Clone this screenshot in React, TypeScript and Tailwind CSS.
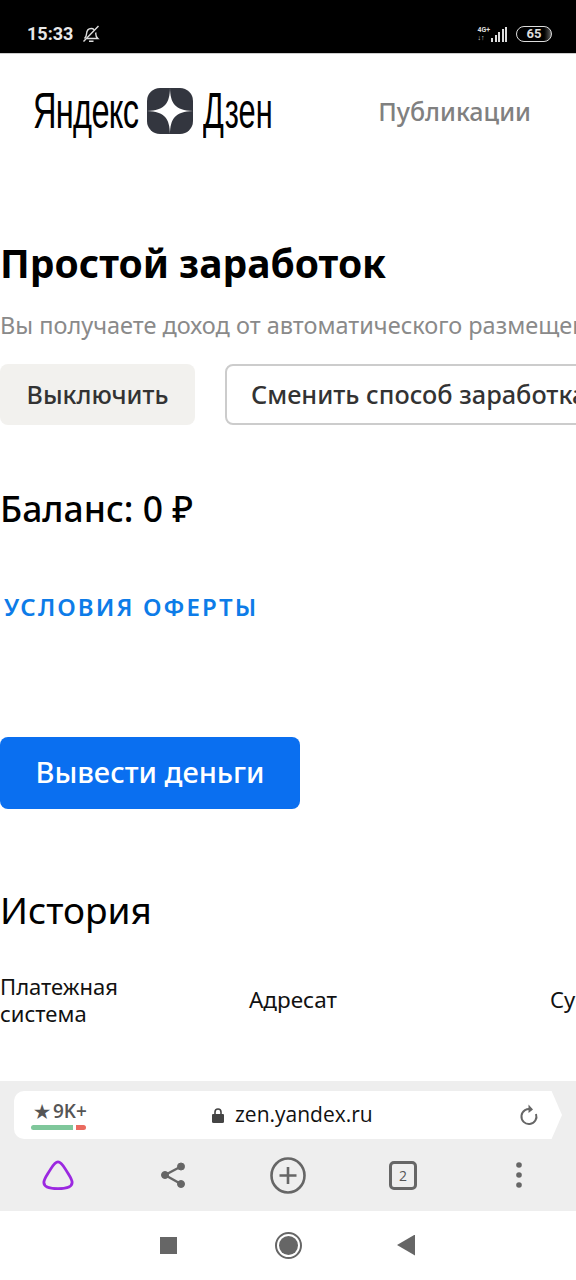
import React from "react";

const sans = "font-['Noto_Sans',sans-serif]";

function StatusBar() {
  return (
    <div className="h-[54px] bg-black flex items-center justify-between pl-[27px] pr-[24px] pt-[14px] border-b border-[#ccc]">
      <div className="flex items-center gap-[9px]">
        <span className="text-[18px] font-bold text-[#e8e8e8] font-['Roboto',sans-serif]">15:33</span>
        <svg width="18" height="18" viewBox="0 0 18 18" fill="none" stroke="#ddd" strokeWidth="1.4">
          <path d="M2.500 13.500c1.300-1.200 1.900-2.200 2-4.500.2-3.200 2-5.500 4.700-5.500 1.200 0 2.200.4 3 1.200M13.700 7.500c.1.500.1 1 .1 1.500 0 2.500.6 3.300 2 4.500H5" />
          <path d="M7 16.200h4.500M1.500 16.500 16.500 1" />
        </svg>
      </div>
      <div className="flex items-center gap-[9px]">
        <div className="flex items-end gap-[1px]">
          <div className="flex flex-col text-[7px] leading-[8px] font-bold text-[#ddd] font-['Roboto',sans-serif]">
            <span>4G+</span>
            <span>↓↑</span>
          </div>
          <div className="flex items-end gap-[1.500px] h-[15px]">
            <div className="w-[2px] h-[4px] bg-[#ddd]" />
            <div className="w-[2px] h-[7px] bg-[#ddd]" />
            <div className="w-[2px] h-[10px] bg-[#ddd]" />
            <div className="w-[2px] h-[13px] bg-[#ddd]" />
            <div className="w-[2px] h-[15px] bg-[#ddd]" />
          </div>
        </div>
        <div className="w-[36px] h-[16px] rounded-full border border-[#ddd] flex items-center justify-center text-[13px] font-bold text-[#ddd] font-['Roboto',sans-serif] leading-none bg-gradient-to-r from-black from-75% to-[#666]">
          65
        </div>
      </div>
    </div>
  );
}

function ZenLogo() {
  return (
    <svg width="46" height="46" viewBox="0 0 46 46">
      <rect width="46" height="46" rx="13" fill="#33363f" />
      <path d="M23 0C23.300 15 28 22.500 46 23 28 23.500 23.300 31 23 46 22.700 31 18 23.500 0 23 18 22.500 22.700 15 23 0Z" fill="#fff" />
    </svg>
  );
}

function Header() {
  return (
    <div className="flex items-center justify-between pl-[33px] pr-[45px] h-[114px]">
      <div className="flex items-center">
        <span className="inline-block w-[106px] text-[50px] leading-none tracking-[-1px] text-black font-['Liberation_Sans',sans-serif] origin-left scale-x-[0.65] whitespace-nowrap">Яндекс</span>
        <span className="ml-[8px] block"><ZenLogo /></span>
        <span className="ml-[10px] inline-block w-[68px] text-[50px] leading-none text-black font-['Liberation_Sans',sans-serif] font-light origin-left scale-x-[0.615] whitespace-nowrap">Дзен</span>
      </div>
      <span className={`text-[25px] font-medium text-[#808080] pt-[2px] ${sans}`}>Публикации</span>
    </div>
  );
}

function BottomBar() {
  return (
    <div className="h-[130px] bg-[#eeeeee] pt-[10px]">
      <div className="mx-[14px] relative h-[48px]">
        <div className="h-[48px] mr-[12px] bg-white rounded-l-[10px] flex items-center">
          <div className="w-[70px] ml-[17px] shrink-0 flex flex-col">
            <div className="flex items-center gap-[3px] pl-[3px] text-[19px] font-semibold text-[#555] leading-[20px] font-['Open_Sans',sans-serif]">
              <span className="text-[18px]">★</span>
              <span>9K+</span>
            </div>
            <div className="flex gap-[3px] mt-[4px]">
              <div className="w-[42px] h-[5px] rounded-l-full bg-[#7fc79b]" />
              <div className="w-[10px] h-[5px] rounded-r-full bg-[#ea6a5f]" />
            </div>
          </div>
          <div className="flex items-center ml-[111px] gap-[11px]">
            <svg width="12" height="15" viewBox="0 0 12 15" fill="#444">
              <path d="M1 6h10a1 1 0 0 1 1 1v6.500a1.500 1.500 0 0 1-1.500 1.500h-9A1.500 1.500 0 0 1 0 13.500V7a1 1 0 0 1 1-1Z" />
              <path d="M3 6V4a3 3 0 0 1 6 0v2" fill="none" stroke="#444" strokeWidth="1.600" />
            </svg>
            <span className="text-[21px] text-[#111] font-['Open_Sans',sans-serif]">zen.yandex.ru</span>
          </div>
          <svg className="ml-auto mr-[11px]" width="20" height="24" viewBox="0 0 20 24" fill="none" stroke="#666" strokeWidth="2">
            <path d="M12.500 6.500A7.500 7.500 0 1 0 17 11" />
            <path d="M9.500 1.500 14 6.500 9.500 10" fill="#666" stroke="none" />
          </svg>
        </div>
        <div className="absolute right-0 top-0 w-[13px] h-[48px] bg-white [clip-path:polygon(0_0,0_100%,20%_100%,100%_50%,20%_0)]" />
      </div>
      <div className="flex items-center pl-[42px] h-[70px] mt-[1px]">
        <svg width="32" height="32" viewBox="0 0 34 32" fill="none" stroke="#9b28e0" strokeWidth="3">
          <path d="M17 2c3 0 5 3 8 8 3.500 6 7 10 7 14 0 5-7 6.500-15 6.500S2 29 2 24c0-4 3.500-8 7-14 3-5 5-8 8-8Z" />
        </svg>
        <svg className="ml-[86px]" width="26" height="28" viewBox="0 0 26 28" fill="#666" stroke="#666">
          <circle cx="21" cy="5.500" r="3.500" />
          <circle cx="5" cy="14" r="3.500" />
          <circle cx="21" cy="23" r="3.500" />
          <path d="M21 5.500 5 14l16 9" fill="none" strokeWidth="2.400" />
        </svg>
        <svg className="ml-[84px]" width="36" height="37" viewBox="0 0 36 37" fill="none" stroke="#666" strokeWidth="2.600">
          <ellipse cx="18" cy="18.500" rx="16.500" ry="17" />
          <path d="M18 10v17M9.500 18.500h17" />
        </svg>
        <div className="ml-[83px] w-[28px] h-[29px] border-[3px] border-[#666] rounded-[5px] flex items-center justify-center text-[14px] text-[#555] font-['Open_Sans',sans-serif]">2</div>
        <svg className="ml-[97px]" width="10" height="28" viewBox="0 0 10 28" fill="#666">
          <circle cx="5" cy="4" r="2.800" />
          <circle cx="5" cy="14" r="2.800" />
          <circle cx="5" cy="24" r="2.800" />
        </svg>
      </div>
    </div>
  );
}

function NavBar() {
  return (
    <div className="h-[69px] bg-white flex items-center pl-[160px] pb-[1px]">
      <div className="w-[17px] h-[17px] bg-[#666]" />
      <div className="ml-[98px] w-[27px] h-[27px] rounded-full border-2 border-[#666] flex items-center justify-center">
        <div className="w-[19px] h-[19px] rounded-full bg-[#666]" />
      </div>
      <div className="ml-[95px] w-[18px] h-[21px] bg-[#666] [clip-path:polygon(100%_0,100%_100%,0_50%)]" />
    </div>
  );
}

export default function App() {
  return (
    <div className={`w-[576px] h-[1280px] bg-white overflow-hidden flex flex-col ${sans}`}>
      <StatusBar />
      <Header />
      <div className="flex-1 overflow-hidden">
        <h1 className="mt-[70px] text-[39px] leading-[50px] font-bold text-black whitespace-nowrap">Простой заработок</h1>
        <p className="mt-[22px] text-[23.500px] leading-[30px] text-[#8a8a8a] whitespace-nowrap">Вы получаете доход от автоматического размещения рекламы</p>
        <div className="mt-[24px] flex gap-[30px]">
          <div className="w-[195px] h-[61px] shrink-0 rounded-[8px] bg-[#f2f1ee] flex items-center justify-center text-[25px] font-medium text-[#333]">Выключить</div>
          <div className="h-[61px] shrink-0 rounded-[8px] border-2 border-[#ccc] flex items-center pl-[24px] pr-[24px] text-[25.300px] font-medium text-[#333] whitespace-nowrap">Сменить способ заработка</div>
        </div>
        <div className="mt-[59px] text-[35.500px] leading-[48px] font-medium text-black">Баланс: 0 ₽</div>
        <div className="mt-[59px] pl-[4px] text-[24px] leading-[32px] font-semibold tracking-[2.100px] text-[#0d7ce8]">УСЛОВИЯ ОФЕРТЫ</div>
        <div className="mt-[114px] w-[300px] h-[72px] pb-[2px] rounded-[8px] bg-[#0a6ff0] flex items-center justify-center text-[29px] font-medium text-white">Вывести деньги</div>
        <div className="mt-[75px] text-[37px] leading-[52px] text-black">История</div>
        <div className="mt-[37px] flex items-center text-[22px] leading-[27px] text-[#111] whitespace-nowrap">
          <div className="w-[249px] shrink-0">Платежная<br />система</div>
          <div className="w-[301px] shrink-0 text-[22.500px] pb-[2px]">Адресат</div>
          <div className="shrink-0 pb-[2px]">Сумма</div>
        </div>
      </div>
      <BottomBar />
      <NavBar />
    </div>
  );
}
